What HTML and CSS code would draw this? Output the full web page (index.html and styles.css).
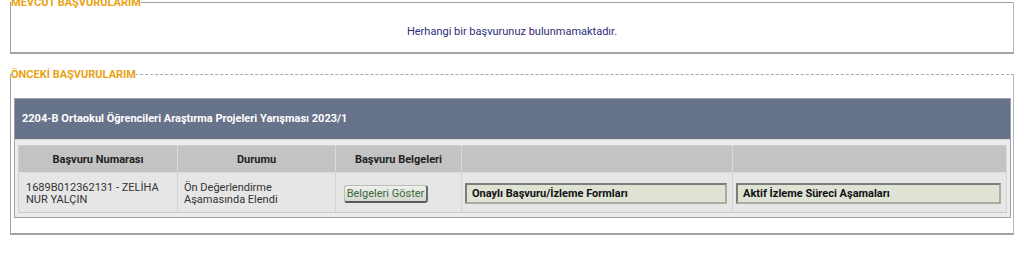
FILE: index.html
```html
<!DOCTYPE html>
<html lang="tr">
<head>
  <meta charset="UTF-8" />
  <title>Başvurularım</title>
  <link rel="stylesheet" href="styles.css">
</head>
<body>
  <fieldset class="box box-current">
    <legend>MEVCUT BAŞVURULARIM</legend>
    <p class="empty">Herhangi bir başvurunuz bulunmamaktadır.</p>
  </fieldset>

  <fieldset class="box box-past">
    <legend>ÖNCEKİ BAŞVURULARIM</legend>
    <div class="app">
      <div class="app-title">2204-B Ortaokul Öğrencileri Araştırma Projeleri Yarışması 2023/1</div>
      <div class="app-body">
        <table class="grid">
          <colgroup>
            <col style="width:159px">
            <col style="width:158px">
            <col style="width:126px">
            <col style="width:271px">
            <col>
          </colgroup>
          <thead>
            <tr>
              <th>Başvuru Numarası</th>
              <th>Durumu</th>
              <th>Başvuru Belgeleri</th>
              <th></th>
              <th></th>
            </tr>
          </thead>
          <tbody>
            <tr>
              <td>1689B012362131 - ZELİHA NUR YALÇIN</td>
              <td>Ön Değerlendirme Aşamasında Elendi</td>
              <td><button class="btn-docs" type="button">Belgeleri Göster</button></td>
              <td><div class="form-link">Onaylı Başvuru/İzleme Formları</div></td>
              <td><div class="form-link">Aktif İzleme Süreci Aşamaları</div></td>
            </tr>
          </tbody>
        </table>
      </div>
    </div>
  </fieldset>
</body>
</html>
```

FILE: styles.css
```css
body {
  margin: 0;
  padding: 0;
  background: #ffffff;
  font-family: Roboto, "Liberation Sans", sans-serif;
  font-size: 11px;
  color: #222;
}
.box {
  margin: 0 10px;
  padding: 0;
  border: 1px solid #a2a2a2;
  border-bottom-width: 2px;
  border-right-color: #b8b8b8;
}
.box legend {
  padding: 0;
  margin-left: 0;
  color: #e9a312;
  font-weight: bold;
  font-size: 11px;
}
.box-current {
  margin-top: -4px;
  height: 55px;
}
.empty {
  margin: 16px 0 0;
  text-align: center;
  color: #2d2d78;
}
.box-past {
  margin-top: 14px;
  border-top: 1px dashed #a8a8a8;
}
.app {
  margin: 17px 2px 15px 3px;
  border: 1px solid #9aa0ac;
}
.app-title {
  background: #67728b;
  color: #fff;
  font-weight: bold;
  height: 40px;
  line-height: 40px;
  padding-left: 7px;
}
.app-body {
  background: #ececec;
  padding: 5px 3px 4px 3px;
  border-top: 1px solid #d6d6d6;
}
.grid {
  width: 100%;
  border-collapse: collapse;
  table-layout: fixed;
  border: 1px solid #cfcfcf;
}
.grid th {
  background: #c3c3c3;
  color: #222;
  font-weight: bold;
  height: 24px;
  border-right: 1px solid #d9d9d9;
  border-bottom: 1px solid #dcdcdc;
}
.grid td {
  background: #e6e6e6;
  color: #333;
  height: 37px;
  padding: 2px 7px 0;
  line-height: 12px;
  vertical-align: middle;
  border-right: 1px solid #d4d4d4;
  border-bottom: 1px solid #c8c8c8;
}
.grid td:nth-child(2) {
  padding-left: 6px;
}
.grid td:nth-child(4),
.grid td:nth-child(5) {
  padding: 2px 3px 0;
}
.btn-docs {
  font-family: inherit;
  font-size: 11px;
  color: #3b6a3b;
  background: linear-gradient(#eef0ec, #d3d8d0);
  border: 1px solid #b9bfb6;
  border-bottom: 2px solid #5a5a5a;
  border-right: 2px solid #6a6a6a;
  border-radius: 3px;
  height: 18px;
  width: 84px;
  padding: 0;
  margin-left: 1px;
}
.form-link {
  background: #dee3d4;
  border: 2px solid #7c7c7c;
  border-right-color: #a9ad9f;
  border-bottom-color: #a9ad9f;
  color: #111;
  font-weight: bold;
  height: 17px;
  line-height: 17px;
  padding-left: 5px;
  margin-right: 2px;
}
```
